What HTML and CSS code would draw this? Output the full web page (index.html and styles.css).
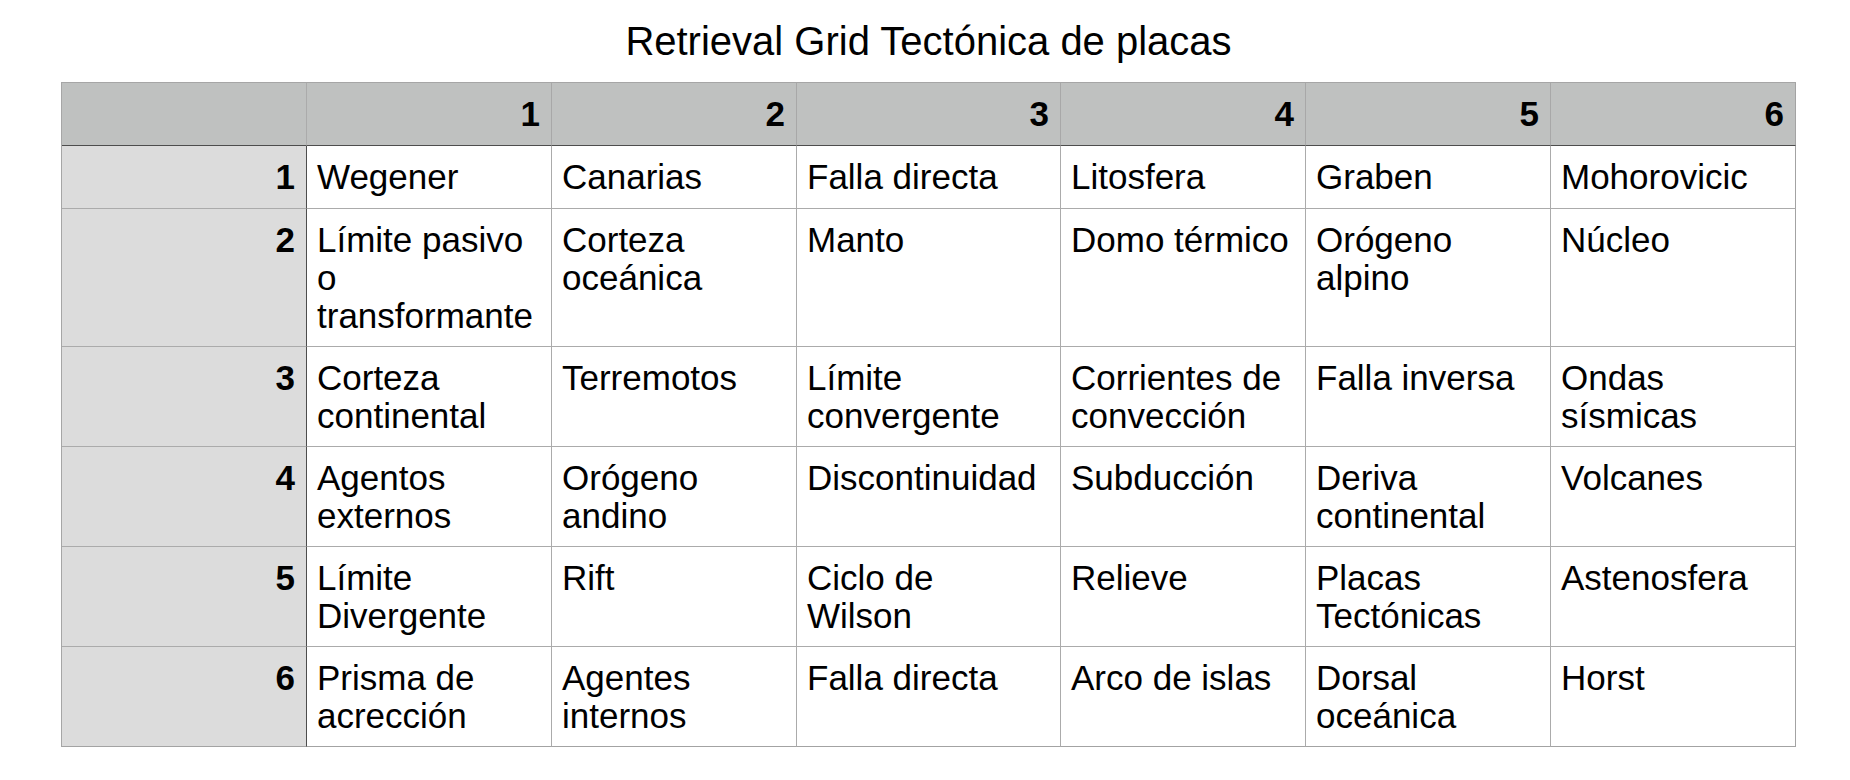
FILE: index.html
```html
<!DOCTYPE html>
<html lang="es">
<head>
<meta charset="utf-8">
<title>Retrieval Grid Tectónica de placas</title>
<link rel="stylesheet" href="styles.css">
</head>
<body>
<main class="page">
  <h1 class="title">Retrieval Grid Tectónica de placas</h1>
  <div class="grid">
    <div class="corner"></div>
    <div class="colhead">1</div>
    <div class="colhead">2</div>
    <div class="colhead">3</div>
    <div class="colhead">4</div>
    <div class="colhead">5</div>
    <div class="colhead last-col">6</div>

    <div class="rowhead">1</div>
    <div class="cell">Wegener</div>
    <div class="cell">Canarias</div>
    <div class="cell">Falla directa</div>
    <div class="cell">Litosfera</div>
    <div class="cell">Graben</div>
    <div class="cell last-col">Mohorovicic</div>

    <div class="rowhead">2</div>
    <div class="cell">Límite pasivo<br>o<br>transformante</div>
    <div class="cell">Corteza<br>oceánica</div>
    <div class="cell">Manto</div>
    <div class="cell">Domo térmico</div>
    <div class="cell">Orógeno<br>alpino</div>
    <div class="cell last-col">Núcleo</div>

    <div class="rowhead">3</div>
    <div class="cell">Corteza<br>continental</div>
    <div class="cell">Terremotos</div>
    <div class="cell">Límite<br>convergente</div>
    <div class="cell">Corrientes de<br>convección</div>
    <div class="cell">Falla inversa</div>
    <div class="cell last-col">Ondas<br>sísmicas</div>

    <div class="rowhead">4</div>
    <div class="cell">Agentos<br>externos</div>
    <div class="cell">Orógeno<br>andino</div>
    <div class="cell">Discontinuidad</div>
    <div class="cell">Subducción</div>
    <div class="cell">Deriva<br>continental</div>
    <div class="cell last-col">Volcanes</div>

    <div class="rowhead">5</div>
    <div class="cell">Límite<br>Divergente</div>
    <div class="cell">Rift</div>
    <div class="cell">Ciclo de<br>Wilson</div>
    <div class="cell">Relieve</div>
    <div class="cell">Placas<br>Tectónicas</div>
    <div class="cell last-col">Astenosfera</div>

    <div class="rowhead last-row">6</div>
    <div class="cell last-row">Prisma de<br>acrección</div>
    <div class="cell last-row">Agentes<br>internos</div>
    <div class="cell last-row">Falla directa</div>
    <div class="cell last-row">Arco de islas</div>
    <div class="cell last-row">Dorsal<br>oceánica</div>
    <div class="cell last-row last-col">Horst</div>
  </div>
</main>
</body>
</html>
```
FILE: styles.css
```css
* {
  box-sizing: border-box;
}

html, body {
  margin: 0;
  padding: 0;
  background: #ffffff;
}

body {
  font-family: "Liberation Sans", Arial, Helvetica, sans-serif;
  color: #000000;
}

.page {
  width: 1735px;
  margin-left: 61px;
  padding-top: 19px;
}

.title {
  margin: 0 0 18px 0;
  font-size: 40px;
  font-weight: 400;
  line-height: 45px;
  text-align: center;
}

.grid {
  display: grid;
  grid-template-columns: 245px 245px 245px 264px 245px 245px 245px;
  border-top: 1px solid #a6a6a6;
  border-left: 1px solid #a6a6a6;
  font-size: 35px;
  line-height: 38px;
}

.corner,
.colhead,
.rowhead,
.cell {
  padding: 11.5px 11px 11.5px 10px;
  border-right: 1px solid #ababab;
  border-bottom: 1px solid #ababab;
  white-space: nowrap;
}

.corner,
.colhead {
  background: #bfc1c0;
  border-bottom: 1px solid #4d4d4d;
  min-height: 63px;
}

.colhead {
  text-align: right;
  font-weight: 700;
  border-right-color: #a8a8a8;
}

.rowhead {
  background: #dcdcdc;
  text-align: right;
  font-weight: 700;
  border-right: 1px solid #4d4d4d;
}

.cell {
  background: #ffffff;
  min-height: 63px;
}

.last-col {
  border-right-color: #a3a3a3;
}

.last-row {
  border-bottom-color: #a3a3a3;
}
```
